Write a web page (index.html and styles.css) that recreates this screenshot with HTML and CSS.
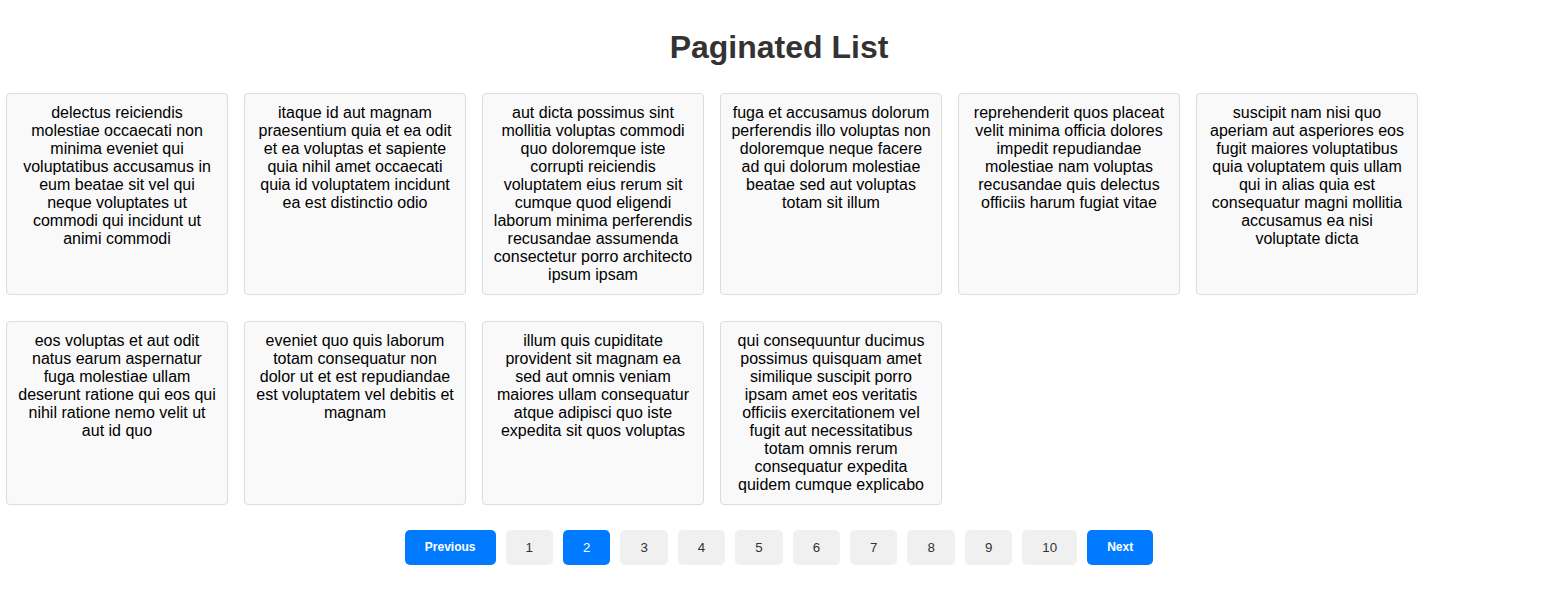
FILE: index.html
```html
<!DOCTYPE html>
<html lang="en">
<head>
<meta charset="utf-8">
<title>Paginated List</title>
<link rel="stylesheet" href="styles.css">
</head>
<body>
<div class="app">
  <h1 class="title">Paginated List</h1>
  <div class="list">
    <div class="card">delectus reiciendis molestiae occaecati non minima eveniet qui voluptatibus accusamus in eum beatae sit vel qui neque voluptates ut commodi qui incidunt ut animi commodi</div>
    <div class="card">itaque id aut magnam praesentium quia et ea odit et ea voluptas et sapiente quia nihil amet occaecati quia id voluptatem incidunt ea est distinctio odio</div>
    <div class="card">aut dicta possimus sint mollitia voluptas commodi quo doloremque iste corrupti reiciendis voluptatem eius rerum sit cumque quod eligendi laborum minima perferendis recusandae assumenda consectetur porro architecto ipsum ipsam</div>
    <div class="card">fuga et accusamus dolorum perferendis illo voluptas non doloremque neque facere ad qui dolorum molestiae beatae sed aut voluptas totam sit illum</div>
    <div class="card">reprehenderit quos placeat velit minima officia dolores impedit repudiandae molestiae nam voluptas recusandae quis delectus officiis harum fugiat vitae</div>
    <div class="card">suscipit nam nisi quo aperiam aut asperiores eos fugit maiores voluptatibus quia voluptatem quis ullam qui in alias quia est consequatur magni mollitia accusamus ea nisi voluptate dicta</div>
    <div class="card">eos voluptas et aut odit natus earum aspernatur fuga molestiae ullam deserunt ratione qui eos qui nihil ratione nemo velit ut aut id quo</div>
    <div class="card">eveniet quo quis laborum totam consequatur non dolor ut et est repudiandae est voluptatem vel debitis et magnam</div>
    <div class="card">illum quis cupiditate provident sit magnam ea sed aut omnis veniam maiores ullam consequatur atque adipisci quo iste expedita sit quos voluptas</div>
    <div class="card">qui consequuntur ducimus possimus quisquam amet similique suscipit porro ipsam amet eos veritatis officiis exercitationem vel fugit aut necessitatibus totam omnis rerum consequatur expedita quidem cumque explicabo</div>
  </div>
  <div class="pagination">
    <button class="btn btn-nav">Previous</button>
    <button class="btn btn-page">1</button>
    <button class="btn btn-page active">2</button>
    <button class="btn btn-page">3</button>
    <button class="btn btn-page">4</button>
    <button class="btn btn-page">5</button>
    <button class="btn btn-page">6</button>
    <button class="btn btn-page">7</button>
    <button class="btn btn-page">8</button>
    <button class="btn btn-page">9</button>
    <button class="btn btn-page">10</button>
    <button class="btn btn-nav">Next</button>
  </div>
</div>
</body>
</html>
```
FILE: styles.css
```css
html, body {
  margin: 0;
  padding: 0;
  background: #ffffff;
}

body {
  font-family: "Liberation Sans", Arial, sans-serif;
  color: #000;
}

.app {
  padding: 0 10px 0 6px;
}

.title {
  margin: 29px 0 27px;
  font-size: 32px;
  line-height: 37px;
  font-weight: bold;
  color: #333;
  text-align: center;
}

.list {
  display: flex;
  flex-wrap: wrap;
  align-items: stretch;
  column-gap: 16px;
  row-gap: 26px;
}

.card {
  box-sizing: border-box;
  width: 222px;
  padding: 10px;
  border: 1px solid #ddd;
  border-radius: 4px;
  background: #f9f9f9;
  font-size: 16px;
  line-height: 18px;
  text-align: center;
}

.pagination {
  display: flex;
  justify-content: center;
  gap: 10px;
  margin-top: 25px;
}

.btn {
  font-family: "Liberation Sans", Arial, sans-serif;
  height: 35px;
  padding: 0 20px;
  border: none;
  border-radius: 5px;
  line-height: 35px;
  cursor: pointer;
}

.btn-nav {
  background: #007bff;
  color: #fff;
  font-size: 12px;
  font-weight: bold;
}

.btn-page {
  background: #f0f0f0;
  color: #333;
  font-size: 13.33px;
}

.btn-page.active {
  background: #007bff;
  color: #fff;
}
```
